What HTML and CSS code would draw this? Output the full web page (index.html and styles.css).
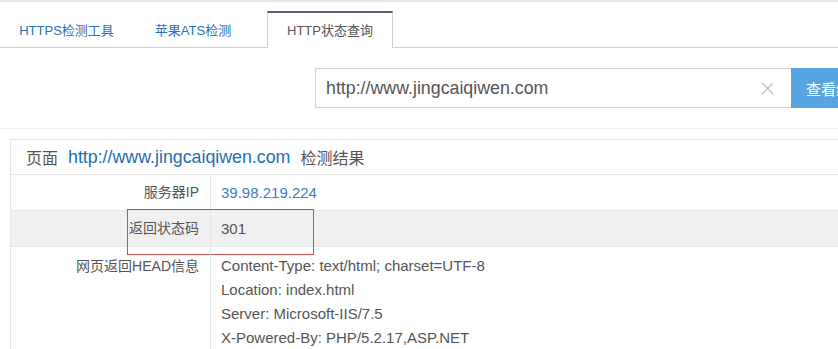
FILE: index.html
```html
<!DOCTYPE html>
<html lang="zh-CN">
  <head>
    <meta charset="UTF-8" />
    <title>HTTP状态查询</title>
    <link rel="stylesheet" href="styles.css">
  </head>
  <body>
    <div class="top-strip"></div>
    <!-- tabs -->
    <div class="tabs">
      <a class="tab tab-https">HTTPS检测工具</a>
      <a class="tab tab-ats">苹果ATS检测</a>
      <a class="tab tab-status active">HTTP状态查询</a>
    </div>
    <!-- search -->
    <div class="search-row">
      <div class="search-input">
        <span class="search-text">http://www.jingcaiqiwen.com</span>
        <svg class="clear-icon" width="13" height="13" viewBox="0 0 13 13">
          <path d="M1 1L12 12M12 1L1 12" stroke="#bdbdbd" stroke-width="1.2" fill="none" />
        </svg>
      </div>
      <button class="search-btn">查看结果</button>
    </div>
    <!-- result -->
    <div class="result">
      <div class="result-head">
        <span>页面</span>
        <span class="result-url">http://www.jingcaiqiwen.com</span>
        <span>检测结果</span>
      </div>
      <div class="result-row">
        <div class="row-label">服务器IP</div>
        <div class="row-value ip">39.98.219.224</div>
      </div>
      <div class="result-row gray">
        <div class="row-label">返回状态码</div>
        <div class="row-value">301</div>
        <div class="mark"></div>
      </div>
      <div class="result-row multi">
        <div class="row-label">网页返回HEAD信息</div>
        <div class="row-value">
          <div class="head-line">Content-Type: text/html; charset=UTF-8</div>
          <div class="head-line">Location: index.html</div>
          <div class="head-line">Server: Microsoft-IIS/7.5</div>
          <div class="head-line">X-Powered-By: PHP/5.2.17,ASP.NET</div>
        </div>
      </div>
    </div>
  </body>
</html>
```

FILE: styles.css
```css
/* base */
html {
  overflow: hidden;
}
body {
  margin: 0;
  width: 1000px;
  font-family: "Liberation Sans", "Noto Sans CJK SC", sans-serif;
  color: #555;
  background-color: #fff;
}
.top-strip {
  height: 2px;
  background-color: #e6e6e6;
}
/* tabs */
.tabs {
  display: flex;
  height: 45px;
  border-bottom: 1px solid #cfcfcf;
}
.tab {
  display: block;
  text-align: center;
  font-size: 13px;
  line-height: 16px;
  padding-top: 21px;
  color: #2571bb;
  box-sizing: border-box;
}
.tab-https {
  width: 133px;
  margin-right: 2px;
}
.tab-ats {
  width: 116px;
  margin-right: 16px;
}
.tab-status {
  width: 126px;
}
.tab.active {
  margin-top: 9px;
  height: 37px;
  padding-top: 10px;
  color: #555;
  background-color: #fff;
  border: 1px solid #cfcfcf;
  border-top: 2px solid #5b6075;
  border-bottom: none;
}
/* search */
.search-row {
  display: flex;
  padding: 20px 0 20px 315px;
  border-bottom: 1px solid #efefef;
}
.search-input {
  display: flex;
  align-items: center;
  width: 476px;
  height: 40px;
  box-sizing: border-box;
  border: 1px solid #d3d4db;
  border-right: none;
  padding: 0 17px 0 10px;
}
.search-text {
  flex: 1;
  font-size: 17.8px;
  color: #555;
}
.clear-icon {
  display: block;
}
.search-btn {
  width: 90px;
  height: 40px;
  border: none;
  background-color: #58a4e0;
  color: #fff;
  font-family: "Noto Sans CJK SC", sans-serif;
  font-size: 15px;
  text-align: left;
  padding: 0 0 0 15px;
}
/* result table */
.result {
  margin: 10px 0 0 10px;
  border: 1px solid #e6e6e6;
  border-right: none;
}
.result-head {
  height: 34px;
  display: flex;
  align-items: center;
  gap: 10px;
  padding-left: 15px;
  font-size: 16px;
  color: #555;
  border-bottom: 1px solid #e6e6e6;
}
.result-url {
  font-size: 17.8px;
  color: #1f6db2;
}
.result-row {
  position: relative;
  display: flex;
  border-bottom: 1px solid #e6e6e6;
  font-size: 14px;
  line-height: 35px;
}
.result-row.gray {
  background-color: #f0f0f0;
}
.row-label {
  width: 200px;
  padding-right: 11px;
  box-sizing: border-box;
  text-align: right;
  border-right: 1px solid #e6e6e6;
}
.row-value {
  padding-left: 10px;
  font-size: 15px;
}
.row-value.ip {
  color: #3a7dc6;
}
.result-row.multi {
  line-height: 24px;
  padding-top: 7px;
  border-bottom: none;
}
.result-row.multi .row-label {
  margin-top: -7px;
  padding-top: 7px;
}
/* annotation */
.mark {
  position: absolute;
  left: 116px;
  top: -2px;
  width: 187px;
  height: 46px;
  box-sizing: border-box;
  border: 1px solid #d24b4b;
}
```
